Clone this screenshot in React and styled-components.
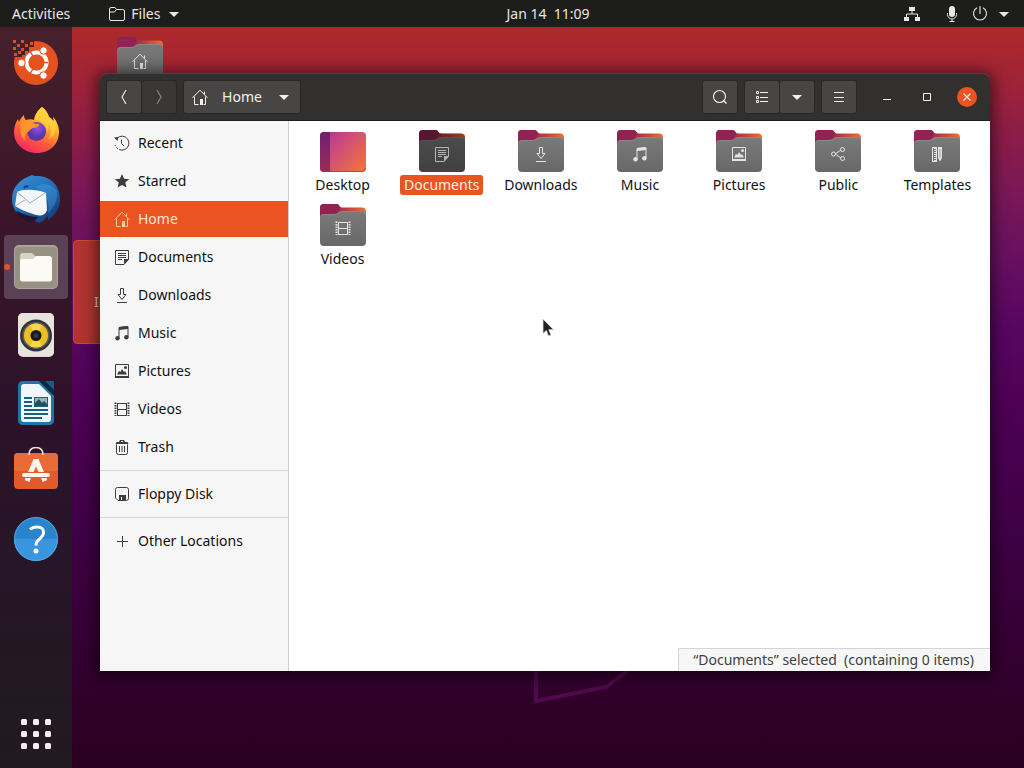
import React from "react";
import styled, { createGlobalStyle } from "styled-components";

const GlobalStyle = createGlobalStyle`
  * {
    box-sizing: border-box;
  }

  body {
    margin: 0;
    font-family: "Noto Sans", "Open Sans", sans-serif;
    font-size: 14px;
    line-height: 20px;
  }

  button {
    font: inherit;
    color: inherit;
    border: 0;
    padding: 0;
    background: none;
  }

  svg {
    display: block;
    flex: none;
  }
`

/* ---------- symbolic icons ---------- */

const glyphs = {
  recent: <>
    <path d="M3 3.200A7 7 0 1 1 1.200 10" fill="none" stroke="currentColor" strokeDasharray="30 1.5 2 1.5" />
    <path d="M7.500 4.500v4l2.500 2.500" fill="none" stroke="currentColor" />
    <path d="M0 2.500l4.500-.5L3.500 6z" fill="currentColor" />
  </>,
  star: <path d="M8 1l2.1 4.700 5 .5-3.800 3.400 1.100 5L8 12l-4.400 2.600 1.100-5L.9 6.200l5-.5z" fill="currentColor" />,
  home: <>
    <path d="M.5 8.800L8 1.200l7.500 7.600M2.500 7.500v8h4M13.500 7.500v8h-2M12.500 5V2.500" fill="none" stroke="currentColor" />
    <path d="M8 10h3v6H8z" fill="currentColor" />
  </>,
  documents: <>
    <path d="M1.500 1.500h13v9l-4.500 5h-8.500z" fill="none" stroke="currentColor" />
    <path d="M4 4.500h8M4 6.500h8M4 8.500h8M4 10.500h4" stroke="currentColor" />
    <path d="M15 10l-5 5.500V10z" fill="currentColor" />
  </>,
  downloads: <path d="M6.500 1.500h3v6h2.500L8 12.500 4 7.500h2.500zM3 15.500h10" fill="none" stroke="currentColor" />,
  music: <>
    <path d="M5 13V2.500l9-1V12" fill="none" stroke="currentColor" />
    <path d="M5 2l9-1v3L5 5z" fill="currentColor" />
    <circle cx="3.500" cy="13.200" r="2.200" fill="currentColor" />
    <circle cx="12.400" cy="12.200" r="2.200" fill="currentColor" />
  </>,
  pictures: <>
    <path d="M1.500 1.500h13v13h-13z" fill="none" stroke="currentColor" />
    <path d="M1 13h14v2H1zM3 11.500l2-3.500 1.500 1L8 6l2 3 1-1 2 3.500z" fill="currentColor" />
    <circle cx="11.500" cy="4.500" r="1.500" fill="currentColor" />
  </>,
  videos: <>
    <path d="M3.500 2v12.500M12.500 2v12.500M3 2.500h10M3 8.500h10M3 14.500h10" fill="none" stroke="currentColor" />
    <path d="M1.500 1.500v13.500M14.500 1.500v13.500" stroke="currentColor" strokeWidth="2" strokeDasharray="1.500 1" />
  </>,
  trash: <>
    <path d="M2.500 5.500v8q0 2 2 2h7q2 0 2-2v-8M5.500 7v6M8 7v6M10.500 7v6" fill="none" stroke="currentColor" />
    <path d="M1.500 5l1-2H5l1-2h4l1 2h2.500l1 2zM7 2v1h2V2z" fill="currentColor" fillRule="evenodd" />
  </>,
  floppy: <>
    <path d="M4 14.500L1.500 12V3.500q0-2 2-2h9q2 0 2 2v9q0 2-2 2z" fill="none" stroke="currentColor" />
    <path d="M5 9h7v6H5z" fill="currentColor" />
    <path d="M7 11h1v3H7z" fill="#f6f6f6" />
  </>,
  plus: <path d="M8.500 3v11M3 8.500h11" stroke="currentColor" />,
  share: <>
    <path d="M5 8l6-4M5 8l6 4" stroke="currentColor" />
    <path d="M12.500 1.500a2 2 0 1 1 0 4 2 2 0 0 1 0-4zM12.500 10.500a2 2 0 1 1 0 4 2 2 0 0 1 0-4zM3.500 6a2 2 0 1 1 0 4 2 2 0 0 1 0-4z" fill="none" stroke="currentColor" />
  </>,
  templates: <>
    <path d="M3.500 1v14M3 1.500h4M3 15.500h5M7.500 1v14" stroke="currentColor" fill="none" />
    <path d="M6 2v13" stroke="currentColor" strokeWidth="2" strokeDasharray="1 1" />
    <path d="M9 1h4v11l-2 3.500L9 12z" fill="currentColor" />
    <path d="M11 3v9" stroke="#777" strokeWidth=".6" />
  </>,
  folder: <path d="M.500 13V3q0-1.500 1.500-1.500h4l1.500 2h6Q15.500 3.500 15.500 5v8q0 1.500-1.500 1.500H2Q.500 14.500.500 13zM.500 6h5l2-2.500" fill="none" stroke="currentColor" />,
  network: <>
    <path d="M5 1h6v4H5zM0 11h5v4H0zM11 11h5v4h-5z" fill="currentColor" />
    <path d="M8 5v3M2.500 11V8h11v3" fill="none" stroke="currentColor" />
  </>,
  mic: <>
    <rect x="5" y="0" width="6" height="11" rx="3" fill="currentColor" />
    <path d="M3.500 7v1.500a4.500 4.500 0 0 0 9 0V7M8 13v3M5.500 15.500h5" fill="none" stroke="currentColor" />
  </>,
  power: <path d="M5 1.800a6.500 6.500 0 1 0 6 0M8 0v8" fill="none" stroke="currentColor" strokeWidth="1.100" />,
  caret: <path d="M3 6h10l-5 5z" fill="currentColor" />,
  back: <path d="M10 1L6 8l4 7" fill="none" stroke="currentColor" strokeWidth="1.100" />,
  forward: <path d="M6 1l4 7-4 7" fill="none" stroke="currentColor" strokeWidth="1.100" />,
  search: <>
    <circle cx="7.500" cy="7.500" r="6" fill="none" stroke="currentColor" strokeWidth="1.100" />
    <path d="M11.500 11.500l3 3" stroke="currentColor" strokeWidth="1.500" />
  </>,
  list: <path d="M2.500 2.500h2v2h-2zM2.500 7.500h2v2h-2zM2.500 11.500h2v2h-2zM6 3.500h8M6 8.500h8M6 12.500h8" fill="none" stroke="currentColor" />,
  menu: <path d="M3 3.500h10M3 8.500h10M3 12.500h10" stroke="currentColor" />,
  minimize: <path d="M4 10.500h8" stroke="currentColor" />,
  maximize: <path d="M4.500 4.500h7v7h-7z" fill="none" stroke="currentColor" />,
  close: <path d="M4.500 4.500l7 7M11.500 4.500l-7 7" stroke="currentColor" strokeWidth="1.200" />,
}

const Glyph = ({ name, size = 16 }) => (
  <svg width={size} height={size} viewBox="0 0 16 16" aria-hidden="true">{glyphs[name]}</svg>
)

/* ---------- folder icons ---------- */

const FolderArt = ({ id, glyph, dark }) => (
  <svg width="46" height="42" viewBox="0 0 46 42" aria-hidden="true">
    <defs>
      <linearGradient id={"back" + id}>
        <stop offset="0" stopColor="#8c2050" />
        <stop offset=".45" stopColor="#a53245" />
        <stop offset="1" stopColor="#ec702c" />
      </linearGradient>
      <linearGradient id={"front" + id} x2="0" y2="1">
        <stop offset="0" stopColor="#7a7a7a" />
        <stop offset="1" stopColor="#686868" />
      </linearGradient>
    </defs>
    <path d="M0 16V4q0-4 4-4h12q2.500 0 3.500 2 1 1.500 3 1.500H42q4 0 4 4V16z" fill={`url(#back${id})`} />
    <path d="M0 16V4q0-4 4-4h12q2.500 0 3.500 2 1 2-.5 4-2 4-5 5z" fill="#902352" />
    <path d="M0 14q0-4 4-4h10q3 0 4.500-1.500T23 7h19q4 0 4 4v27q0 4-4 4H4q-4 0-4-4z" fill={`url(#front${id})`} />
    <path d="M.500 13q.5-2.500 3.500-2.500h10q3 0 4.500-1.500T23 7.500h19q3 0 3.500 2.500" fill="none" stroke="#a08c8c" strokeOpacity=".6" />
    {dark && <path d="M0 4q0-4 4-4h12q2.500 0 3.500 2 1 1.500 3 1.500H42q4 0 4 4V38q0 4-4 4H4q-4 0-4-4z" fill="#000" fillOpacity=".38" />}
    <svg x="15" y="16" width="16" height="16" viewBox="0 0 16 16" color={dark ? "#b4b4b4" : "#e4e4e4"}>{glyphs[glyph]}</svg>
  </svg>
)

const DesktopArt = () => (
  <svg width="46" height="42" viewBox="0 0 46 42" aria-hidden="true">
    <defs>
      <linearGradient id="desk" y2=".8">
        <stop offset="0" stopColor="#a8378c" />
        <stop offset=".4" stopColor="#cb4a80" />
        <stop offset="1" stopColor="#f0703f" />
      </linearGradient>
      <linearGradient id="deskSide" x2="0" y2="1">
        <stop offset="0" stopColor="#702070" />
        <stop offset="1" stopColor="#9c2b58" />
      </linearGradient>
    </defs>
    <rect y="2" width="46" height="40" rx="4" fill="url(#desk)" />
    <path d="M10 2v40H4q-4 0-4-4V6q0-4 4-4z" fill="url(#deskSide)" />
    <path d="M.500 38q.5 3.500 3.500 3.500h38q3 0 3.500-3.500" fill="none" stroke="#9c3a40" strokeOpacity=".7" />
  </svg>
)

/* ---------- dock icons, all on a 48px grid ---------- */

const pixels = [
  [1, 1], [9, 1], [5, 5], [1, 8], [9, 9], [13, 5], [18, 3], [2, 14], [6, 12], [13, 12], [10, 16], [5, 18],
]

const dockArt = {
  installer: <>
    <circle cx="24" cy="24" r="22" fill="#e4521f" />
    <path d="M0 0h22v8h-5v5h-4v5H0z" fill="#43202b" />
    {pixels.map(([x, y]) => <rect key={x + "-" + y} x={x} y={y} width="3" height="3" fill="#d5502a" />)}
    <circle cx="24.500" cy="23.500" r="10" fill="none" stroke="#fff" strokeWidth="4" />
    <g stroke="#e4521f" strokeWidth="1.500">
      <path d="M24.500 23.500L36 23.500M24.500 23.500L18 12M24.500 23.500L18 35" />
    </g>
    <circle cx="24.500" cy="23.500" r="7.800" fill="#e4521f" />
    <g fill="#fff" stroke="#e4521f">
      <circle cx="9.500" cy="24" r="3.700" />
      <circle cx="31.500" cy="11.500" r="3.700" />
      <circle cx="31.500" cy="36.500" r="3.700" />
    </g>
  </>,
  firefox: <>
    <defs>
      <linearGradient id="ff" x1=".8" y1="0" x2=".25" y2="1">
        <stop offset="0" stopColor="#fff04a" />
        <stop offset=".35" stopColor="#ffb02e" />
        <stop offset=".65" stopColor="#ff6038" />
        <stop offset="1" stopColor="#f0206c" />
      </linearGradient>
      <radialGradient id="ffGlobe" cx=".55" cy=".3">
        <stop offset="0" stopColor="#8f55e8" />
        <stop offset="1" stopColor="#5a35a8" />
      </radialGradient>
    </defs>
    <path d="M30 0c5 4 6 7 7 10 2 1 5 4 5 4s-1-3-1-4c4 4 6 10 6 15 0 12-9 21-22 21S2 37 2 25c0-6 2-10 4-13l1 3c1-3 3-5 5-7 0 3 1 4 2 5 3-1 6-1 8 0 1-6 4-10 8-13z" fill="url(#ff)" />
    <circle cx="24.500" cy="24.500" r="9.500" fill="url(#ffGlobe)" />
    <path d="M9 16c3-3 7-3 10-2 2 1 3 3 5 3h3c1 2-3 4-6 4-3 1-3 3-5 4-3 2-4 5-2 9-4-2-7-9-5-18z" fill="#ff9428" />
    <path d="M30 0c-4 3-7 8-7 13 7 0 12 5 12 12 2-3 2-6 1-9 4 5 4 12 0 17 7-4 9-12 7-18-1 0-5-4-6-5-1-4-3-7-7-10z" fill="#ffd23c" fillOpacity=".75" />
  </>,
  thunderbird: <>
    <defs>
      <linearGradient id="tb" x2=".7" y2="1">
        <stop offset="0" stopColor="#3a96dc" />
        <stop offset=".6" stopColor="#2168b4" />
        <stop offset="1" stopColor="#183a78" />
      </linearGradient>
    </defs>
    <path d="M20 0c2 1 3 1 5 1 14 0 23 10 23 23 0 9-5 17-12 21 0-2 0-3-1-4-2 4-5 6-8 7L5 38C1 33 0 28 0 24 0 11 9 4 20 0z" fill="url(#tb)" />
    <path d="M24 12c8-6 17-2 21 4 1 9-3 17-9 22 1-8 0-14-3-18z" fill="#50b4ee" fillOpacity=".3" />
    <path d="M5 17c5-3 20-3 29 1l1 17c-2 7-9 6-14 4-7-2-13-5-18-8z" fill="#f4f6fa" />
    <path d="M5 17l13 11 15-10M3 31l10-6" fill="none" stroke="#909aa8" strokeWidth=".8" />
    <path d="M12 13c1-2 3-2 4-1" stroke="#123c78" fill="none" strokeWidth="2" />
    <path d="M4 36c8 3 14 6 22 6-2 3-4 4-8 5C12 46 7 42 4 36z" fill="#24152c" />
  </>,
  files: <>
    <rect x="2" y="2" width="44" height="44" rx="5" fill="#aba698" />
    <rect x="3" y="4" width="42" height="41" rx="4" fill="#969183" />
    <path d="M8 28V13q0-3 3-3h9l4 4h13q3 0 3 3v11z" fill="#d6d3c7" />
    <path d="M8 18q0-2 2-2h11l3-3h13q3 0 3 3v20q0 2.500-2.500 2.500h-27Q8 38.500 8 36z" fill="#fbfaf5" />
  </>,
  rhythmbox: <>
    <rect x="6" y="2" width="36" height="44" rx="5" fill="#ded8d3" />
    <rect x="6" y="2" width="36" height="43" rx="5" fill="#e9e3de" />
    <circle cx="24" cy="24.500" r="16" fill="#303438" />
    <circle cx="24" cy="24.500" r="13.500" fill="#5c6062" />
    <circle cx="24" cy="24.500" r="12" fill="#eebf20" />
    <path d="M24 24.500l-6-10.300a12 12 0 0 1 12 0zM24 24.500l6 10.300a12 12 0 0 1-12 0z" fill="#f6d84a" />
    <circle cx="24" cy="24.500" r="5.500" fill="#171a1c" />
    <circle cx="24" cy="24.500" r="2.500" fill="#383838" />
  </>,
  writer: <>
    <path d="M11 2h31v39q0 5-5 5H11q-5 0-5-5V7q0-5 5-5z" fill="#1c78a4" />
    <path d="M28 2h14v12z" fill="#12608a" />
    <path d="M27 2l15 15v-6L33 2z" fill="#082840" />
    <path d="M12 5h15l12 12v23q0 3-3 3H12q-3 0-3-3V8q0-3 3-3z" fill="#f0f6fa" />
    <path d="M12 19h8M12 23h8M12 27h8M12 31h24M12 35h24M12 39h18" stroke="#186080" strokeWidth="2" />
    <path d="M22 18h14v10H22z" fill="#176080" />
    <path d="M23 19h12v8H23z" fill="#8cb8c0" />
    <path d="M23 27v-3l4-4 3 4 2-2 3 3v2z" fill="#244c5c" />
  </>,
  software: <>
    <rect x="2" y="6" width="44" height="36" rx="4" fill="#e2592a" />
    <path d="M6 6h36q4 0 4 4v14H2V10q0-4 4-4z" fill="#e96a35" />
    <path d="M17 8q0-7.500 7-7.500T31 8" fill="none" stroke="#f5dfd2" strokeWidth="1.500" />
    <path d="M23.500 14l-8.500 20M24.500 14l8.500 20" stroke="#fff6ee" strokeWidth="5" />
    <path d="M21 12h6v3h-6z" fill="#fff6ee" />
    <path d="M12 28h24" stroke="#e2592a" strokeWidth="6" />
    <path d="M12 28h24" stroke="#fff6ee" strokeWidth="4" strokeLinecap="round" />
  </>,
  help: <>
    <circle cx="24" cy="24" r="22" fill="#2a84cc" />
    <path d="M2 24a22 22 0 0 0 44 0z" fill="#3a95de" />
    <circle cx="24" cy="24" r="21.500" fill="none" stroke="#5cb0e8" strokeOpacity=".7" />
    <path d="M18 14.500q2.500-2.500 7-2.500 7 0 6.500 6-.3 3-4 6-3.500 2.500-3.500 6.500" fill="none" stroke="#fff" strokeWidth="3" />
    <circle cx="24" cy="36" r="2.500" fill="#fff" />
  </>,
  apps: <>
    {[9, 21, 33].map(y => [9, 21, 33].map(x => (
      <rect key={x + "-" + y} x={x} y={y} width="6" height="6" rx="1.500" fill="#f8ecf2" />
    )))}
  </>,
}

/* ---------- layout ---------- */

const Screen = styled.div`
  display: flex;
  flex-direction: column;
  height: 100vh;
  min-height: 680px;
  overflow: hidden;
  background: linear-gradient(
    #b02a2c 0%, #ab282d 5%, #9e2338 11%, #8d1d46 17%, #7a1857 25%,
    #681060 33%, #560660 43%, #4a0052 56%, #3e0044 70%, #330030 86%, #2a001f 100%
  );
`

const TopBar = styled.header`
  display: grid;
  grid-template-columns: 1fr auto 1fr;
  align-items: center;
  height: 27px;
  padding-left: 72px;
  background: #1d1d1b;
  color: #e9e7e3;
`

const TopLeft = styled.div`
  display: flex;
  align-items: center;
  gap: 39px;
  margin-left: -60px;
`

const TopRight = styled.div`
  display: flex;
  align-items: center;
  justify-content: flex-end;
  gap: 8px;
  padding-right: 12px;
`

const StatusIcon = styled.span`
  margin-right: ${p => p.$space}px;
`

const TopButton = styled.button`
  display: flex;
  align-items: center;
  gap: ${p => p.$gap || 0}px;
  white-space: pre;
`

const Body = styled.div`
  display: flex;
  flex: 1;
  min-height: 0;
`

const Dock = styled.nav`
  display: flex;
  flex-direction: column;
  align-items: center;
  gap: 4px;
  width: 72px;
  padding: 4px 0 2px;
  background: linear-gradient(#46202a, #3b1629 25%, #2c1229 52%, #261628 75%, #211a1f);

  & > :last-child {
    margin-top: auto;
  }
`

const DockItem = styled.button`
  position: relative;
  display: grid;
  place-items: center;
  width: 64px;
  height: 64px;
  border-radius: 4px;
  background: ${p => p.$active ? "#5a4156" : "none"};
`

const RunningDot = styled.span`
  position: absolute;
  left: 0;
  width: 6px;
  height: 6px;
  border-radius: 3px;
  background: #e2502c;
`

const Desktop = styled.main`
  position: relative;
  flex: 1;
`

const WallpaperLines = styled.svg`
  position: absolute;
  left: 458px;
  bottom: 60px;
`

const DesktopFolder = styled.button`
  position: absolute;
  top: 10px;
  left: 45px;
`

const DesktopLauncher = styled.button`
  position: absolute;
  top: 213px;
  left: 1px;
  width: 134px;
  height: 104px;
  padding: 20px 20px 0;
  border: 1px solid #d0482f;
  border-radius: 4px;
  background: #b03430;
  color: #e6c4b4;
  text-align: left;
`

const Window = styled.section`
  position: absolute;
  top: 46px;
  right: 34px;
  bottom: 97px;
  left: 28px;
  display: flex;
  flex-direction: column;
  border-radius: 8px 8px 0 0;
  box-shadow: 0 2px 14px 4px rgba(0, 0, 0, 0.5);
`

const HeaderBar = styled.header`
  display: flex;
  align-items: center;
  gap: 8px;
  height: 48px;
  padding: 0 13px 0 7px;
  border-top: 1px solid #4a4542;
  border-bottom: 1px solid #201e1d;
  border-radius: 8px 8px 0 0;
  background: #32302f;
  color: #f2f1ef;
`

const Spacer = styled.div`
  flex: 1;
`

const Linked = styled.div`
  display: flex;
  gap: 1px;
`

const ToolButton = styled.button`
  display: flex;
  align-items: center;
  justify-content: center;
  width: 34px;
  height: 32px;
  border-radius: 2px;
  background: ${p => p.disabled ? "#393837" : "#474645"};
  color: ${p => p.disabled ? "#8c8a88" : "#f2f1ef"};
  box-shadow: 0 0 0 1px #2a2827;
`

const PathButton = styled(ToolButton)`
  width: 116px;
  justify-content: space-between;
  padding: 0 8px;
`

const WindowControls = styled.div`
  display: flex;
  gap: 20px;
  margin-left: 13px;
`

const ControlButton = styled.button`
  display: grid;
  place-items: center;
  width: 20px;
  height: 20px;
  border-radius: 10px;
  background: ${p => p.$close ? "#e95420" : "none"};
`

const Content = styled.div`
  display: flex;
  flex: 1;
  min-height: 0;
  background: #fff;
`

const Sidebar = styled.nav`
  display: flex;
  flex-direction: column;
  gap: 2px;
  width: 189px;
  padding-top: 4px;
  border-right: 1px solid #cfcfcf;
  background: #f6f6f6;
`

const Place = styled.a`
  display: flex;
  align-items: center;
  gap: 8px;
  height: 36px;
  padding-left: 14px;
  text-decoration: none;
  color: ${p => p.$selected ? "#fbe6da" : "#111"};
  background: ${p => p.$selected ? "#e95420" : "none"};

  svg {
    color: ${p => p.$selected ? "#fbcdb0" : "#3d3d3d"};
  }
`

const Divider = styled.hr`
  width: 100%;
  margin: 3px 0;
  border: 0;
  border-top: 1px solid #d6d6d6;
`

const FilePane = styled.div`
  position: relative;
  flex: 1;
`

const FileGrid = styled.div`
  display: grid;
  grid-template-columns: repeat(auto-fill, minmax(96px, 1fr));
  row-gap: 9px;
  padding: 9px 3px 0 4px;
`

const FileItem = styled.button`
  display: flex;
  flex-direction: column;
  align-items: center;
  gap: 3px;
  color: #111;
`

const FileLabel = styled.span`
  padding: 0 4px;
  border-radius: 3px;
  background: ${p => p.$selected ? "#e95420" : "none"};
  color: ${p => p.$selected ? "#fdeee4" : "inherit"};
`

const StatusBar = styled.div`
  position: absolute;
  right: 0;
  bottom: 0;
  padding: 1px 16px 1px 14px;
  border-top: 1px solid #d4d4d4;
  border-left: 1px solid #d4d4d4;
  border-radius: 2px 0 0 0;
  background: #f7f7f7;
  color: #404040;
  white-space: pre;
`

const Pointer = styled.svg`
  position: absolute;
  top: 291px;
  left: 470px;
  pointer-events: none;
`

const dockItems = [
  ["installer", "Install Ubuntu"],
  ["firefox", "Firefox"],
  ["thunderbird", "Thunderbird Mail"],
  ["files", "Files"],
  ["rhythmbox", "Rhythmbox"],
  ["writer", "LibreOffice Writer"],
  ["software", "Ubuntu Software"],
  ["help", "Help"],
  ["apps", "Show Applications"],
]

const places = [
  ["recent", "Recent"],
  ["star", "Starred"],
  ["home", "Home"],
  ["documents", "Documents"],
  ["downloads", "Downloads"],
  ["music", "Music"],
  ["pictures", "Pictures"],
  ["videos", "Videos"],
  ["trash", "Trash"],
  null,
  ["floppy", "Floppy Disk"],
  null,
  ["plus", "Other Locations"],
]

const files = [
  ["desktop", "Desktop"],
  ["documents", "Documents"],
  ["downloads", "Downloads"],
  ["music", "Music"],
  ["pictures", "Pictures"],
  ["share", "Public"],
  ["templates", "Templates"],
  ["videos", "Videos"],
]

const FilesWindow = () => {
  const [place, setPlace] = React.useState("Home")
  const [selected, setSelected] = React.useState("Documents")

  return (
    <Window aria-label="Home">
      <HeaderBar>
        <Linked>
          <ToolButton aria-label="Back"><Glyph name="back" /></ToolButton>
          <ToolButton aria-label="Forward" disabled><Glyph name="forward" /></ToolButton>
        </Linked>
        <PathButton>
          <Glyph name="home" />
          <span>Home</span>
          <Glyph name="caret" />
        </PathButton>
        <Spacer />
        <ToolButton aria-label="Search"><Glyph name="search" /></ToolButton>
        <Linked>
          <ToolButton aria-label="List view"><Glyph name="list" /></ToolButton>
          <ToolButton aria-label="View options"><Glyph name="caret" /></ToolButton>
        </Linked>
        <ToolButton aria-label="Menu"><Glyph name="menu" /></ToolButton>
        <WindowControls>
          <ControlButton aria-label="Minimize"><Glyph name="minimize" /></ControlButton>
          <ControlButton aria-label="Maximize"><Glyph name="maximize" /></ControlButton>
          <ControlButton aria-label="Close" $close><Glyph name="close" /></ControlButton>
        </WindowControls>
      </HeaderBar>
      <Content>
        <Sidebar aria-label="Places">
          {places.map((item, i) => item
            ? (
              <Place key={item[1]} href="#" $selected={item[1] === place} onClick={() => setPlace(item[1])}>
                <Glyph name={item[0]} />
                {item[1]}
              </Place>
            )
            : <Divider key={i} />
          )}
        </Sidebar>
        <FilePane>
          <FileGrid>
            {files.map(([icon, name]) => (
              <FileItem key={name} onClick={() => setSelected(name)}>
                {icon === "desktop"
                  ? <DesktopArt />
                  : <FolderArt id={icon} glyph={icon} dark={name === selected} />}
                <FileLabel $selected={name === selected}>{name}</FileLabel>
              </FileItem>
            ))}
          </FileGrid>
          <StatusBar>“{selected}” selected  (containing 0 items)</StatusBar>
        </FilePane>
      </Content>
    </Window>
  )
}

export default function App() {
  return (
    <Screen>
      <GlobalStyle />
      <TopBar>
        <TopLeft>
          <TopButton>Activities</TopButton>
          <TopButton $gap={6}>
            <Glyph name="folder" />
            <span>Files</span>
            <Glyph name="caret" />
          </TopButton>
        </TopLeft>
        <TopButton>Jan 14  11:09</TopButton>
        <TopRight>
          <StatusIcon $space={16}><Glyph name="network" /></StatusIcon>
          <StatusIcon $space={4}><Glyph name="mic" /></StatusIcon>
          <StatusIcon $space={0}><Glyph name="power" /></StatusIcon>
          <StatusIcon $space={0}><Glyph name="caret" /></StatusIcon>
        </TopRight>
      </TopBar>
      <Body>
        <Dock aria-label="Dock">
          {dockItems.map(([icon, label]) => (
            <DockItem key={icon} aria-label={label} $active={icon === "files"}>
              {icon === "files" && <RunningDot />}
              <svg width="48" height="48" viewBox="0 0 48 48" aria-hidden="true">{dockArt[icon]}</svg>
            </DockItem>
          ))}
        </Dock>
        <Desktop>
          <WallpaperLines width="110" height="50" viewBox="0 0 110 50" aria-hidden="true">
            <path d="M6 0v43l70-14L104 8" fill="none" stroke="#5a0c58" strokeWidth="4" strokeOpacity=".75" />
          </WallpaperLines>
          <DesktopFolder aria-label="Home folder">
            <FolderArt id="deskhome" glyph="home" />
          </DesktopFolder>
          <DesktopLauncher aria-label="Install Ubuntu">In</DesktopLauncher>
          <FilesWindow />
          <Pointer width="13" height="20" viewBox="0 0 13 20" aria-hidden="true">
            <path d="M1 1v14.500l3.300-3 2.200 5.500 2.500-1-2.200-5.300h4.700z" fill="#222" stroke="#ddd" strokeWidth=".8" />
          </Pointer>
        </Desktop>
      </Body>
    </Screen>
  )
}
